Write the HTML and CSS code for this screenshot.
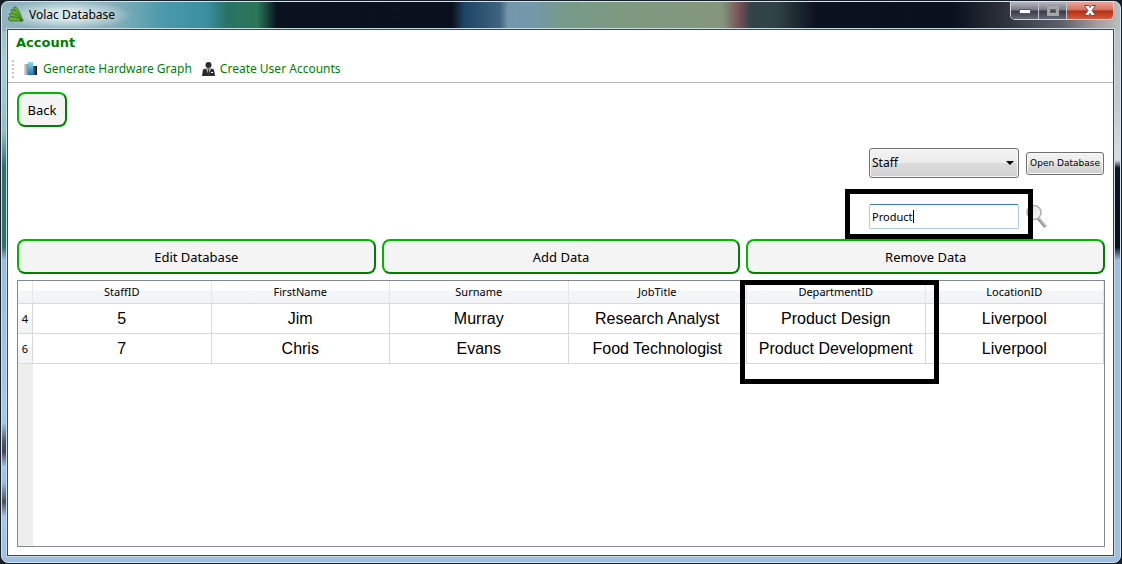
FILE: index.html
```html
<!DOCTYPE html>
<html lang="en">
<head>
<meta charset="utf-8">
<title>Volac Database</title>
<link rel="stylesheet" href="styles.css">
</head>
<body>
<div class="window">
  <header class="titlebar">
    <svg class="logo" width="16" height="16" viewBox="0 0 16 16" aria-hidden="true">
      <g fill="#62b233" stroke="#2c5f20" stroke-width=".7">
        <path d="M13 14C9 9 5 4 6 1C9 0 12 6 14 13Z"/>
        <path d="M13 14C8 11 3 7 3 4C6 2 10 7 13 13Z"/>
        <path d="M13 14C8 13 2 11 1 8C4 6 9 9 13 13Z"/>
        <path d="M14 15H2C0 14 0 12 1 11C5 10 10 12 14 14Z"/>
        <path d="M14 14L15 13L15 15H12Z"/>
      </g>
    </svg>
    <h1 class="title">Volac Database</h1>
    <div class="caption-buttons">
      <button class="cap" type="button" aria-label="Minimize">
        <svg width="12" height="6" viewBox="0 0 12 6"><rect x=".5" y="1.5" width="11" height="4" fill="#fff" stroke="#555b6b"/></svg>
      </button>
      <button class="cap" type="button" aria-label="Maximize" disabled>
        <svg width="12" height="10" viewBox="0 0 12 10"><path d="M1.5 1.5h9v7h-9z" fill="none" stroke="#a5a6a8" stroke-width="3"/><path d="M3.5 3.5h5v3h-5z" fill="none" stroke="#606368"/></svg>
      </button>
      <button class="cap cap-close" type="button" aria-label="Close">
        <svg width="12" height="11" viewBox="0 0 12 11"><path d="M.5.5h4L6 2.5 7.500.5h4L8 5.500l3.500 5h-4L6 8.500l-1.500 2h-4L4 5.500z" fill="#fff" stroke="#52576c"/></svg>
      </button>
    </div>
  </header>
  <main class="client">
    <nav class="menubar"><a class="menu" href="#account">Account</a></nav>
    <div class="toolbar" role="toolbar" aria-label="Account">
      <span class="grip"></span>
      <button class="tool" type="button">
        <svg width="14" height="14" viewBox="0 0 14 14" aria-hidden="true">
          <defs>
            <linearGradient id="g1"><stop stop-color="#ddd"/><stop offset="1" stop-color="#888"/></linearGradient>
            <linearGradient id="g2" x2="0" y2="1"><stop stop-color="#8fd6f0"/><stop offset="1" stop-color="#1b78b4"/></linearGradient>
            <linearGradient id="g3"><stop stop-color="#666"/><stop offset="1" stop-color="#111"/></linearGradient>
          </defs>
          <path fill="url(#g1)" d="M0 2h4v11H0z"/><path fill="url(#g2)" d="M4 0h5v13H4z"/><path fill="url(#g3)" d="M9 4h4v9H9z"/>
        </svg>
        Generate Hardware Graph
      </button>
      <button class="tool" type="button">
        <svg width="13" height="14" viewBox="0 0 13 14" aria-hidden="true">
          <circle cx="6.500" cy="3" r="3" fill="#2b2b2b"/>
          <path d="M1 7.500L4 6.500H9L12 7.500L13 14H0Z" fill="#2b2b2b"/>
          <path d="M4 6.500L6.500 13L9 6.500L7.500 7.500H5.500Z" fill="#fff"/>
          <path d="M5.800 7.500H7.200L7.500 11L6.500 13L5.500 11Z" fill="#2b2b2b"/>
          <path d="M9 10.500h2" stroke="#fff"/>
        </svg>
        Create User Accounts
      </button>
    </div>
    <div class="content">
      <button class="action back" type="button">Back</button>
      <form class="controls" onsubmit="return false">
        <div class="picker">
          <select class="table-select" aria-label="Table"><option>Staff</option></select>
        </div>
        <button class="open" type="button">Open Database</button>
        <div class="search">
          <input class="search-input" type="text" value="Product" aria-label="Search">
          <span class="caret"></span>
          <span class="marker marker-search"></span>
        </div>
        <button class="find" type="button" aria-label="Find">
          <svg width="22" height="25" viewBox="0 0 22 25">
            <defs><linearGradient id="lens" x2="1" y2="1"><stop stop-color="#ddd"/><stop offset="1" stop-color="#fafafa"/></linearGradient></defs>
            <path d="M12 14L19.500 23" stroke="#9a9a9a" stroke-width="3.500"/>
            <path d="M13 14L20 22" stroke="#ddd" stroke-width="1"/>
            <circle cx="8" cy="8.500" r="7" fill="url(#lens)" stroke="#b0b0b0" stroke-width="1.500"/>
          </svg>
        </button>
      </form>
      <div class="actions">
        <button class="action" type="button">Edit Database</button>
        <button class="action" type="button">Add Data</button>
        <button class="action" type="button">Remove Data</button>
      </div>
      <div class="grid-view">
        <table class="grid">
          <thead>
            <tr><td class="corner"></td><th>StaffID</th><th>FirstName</th><th>Surname</th><th>JobTitle</th><th class="marked">DepartmentID<span class="marker marker-column"></span></th><th>LocationID</th></tr>
          </thead>
          <tbody>
            <tr><th>4</th><td>5</td><td>Jim</td><td>Murray</td><td>Research Analyst</td><td>Product Design</td><td>Liverpool</td></tr>
            <tr><th>6</th><td>7</td><td>Chris</td><td>Evans</td><td>Food Technologist</td><td>Product Development</td><td>Liverpool</td></tr>
          </tbody>
        </table>
      </div>
    </div>
  </main>
</div>
</body>
</html>
```
FILE: styles.css
```css
* { box-sizing: border-box; }

body {
  margin: 0;
  background: #15202a;
  color: #000;
  font: 12px/16px "Noto Sans", sans-serif;
}

button, select, input { font: inherit; color: inherit; margin: 0; }

.window {
  display: flex;
  flex-direction: column;
  min-height: calc(100vh - 2px);
  margin: 1px;
  padding: 0 6px 6px 5px;
  border: 1px solid #d5e4ec;
  border-radius: 7px;
  background:
    linear-gradient(90deg, #8fb4bd 0, #88b0ba 110px, #4c9aab 160px, #3a8f9f 205px, #287267 225px, #2c7758 255px, #0a121f 275px, #0a111d 450px, #1d4465 462px, #3f6480 498px, #7396ab 506px, #7299aa 530px, #759a8b 560px, #7d997f 620px, #84967d 720px, #795155 737px, #34444a 748px, #2e4244 775px, #0b111d 815px, #0a111c 950px, #2c303b 1000px, #5d606b 1060px, #a79a9f 1095px, #b8c0bd 100%) top / 100% 29px no-repeat,
    linear-gradient(#8fb4bd 0, #a9cdd8 60px, #90bdc8 130px, #2e6f72 165px, #2e7469 245px, #9ebae0 258px, #a5c8ef 420px, #4d566b 440px, #46495c 450px, #a5c8ef 465px, #9dbbe0 480px, #484e62 500px, #a8c8ea 515px, #9dbfe2 100%) left / 50% 100% no-repeat,
    linear-gradient(#b8c0bd 0, #c5c6cf 100px, #dadbe4 158px, #0a1624 166px, #08101a 245px, #9dbfe2 258px, #9dbfe2 100%) right / 50% 100% no-repeat;
}

.titlebar {
  display: flex;
  align-items: flex-start;
  height: 27px;
  padding-left: 1px;
  background: radial-gradient(ellipse 65px 15px at 60px 13px, #dbe8ec 30%, transparent);
}

.logo { margin: 4px 5px 0 0; }

.title {
  flex: 1;
  margin: 5px 0 0;
  font-size: 12px;
  font-weight: 400;
  line-height: 16px;
}

.caption-buttons {
  display: flex;
  border: 1px solid #d5d5da;
  border-top: 0;
  border-radius: 0 0 5px 5px;
  overflow: hidden;
}

.cap {
  display: grid;
  place-items: center;
  width: 28px;
  height: 17px;
  padding: 0;
  border: 0;
  border-right: 1px solid #c5c6cc;
  background: linear-gradient(#b5b6bd, #777a84 48%, #343946 52%, #656975);
}

.cap-close {
  width: 46px;
  border-right: 0;
  background: linear-gradient(#eca398, #d4705d 48%, #b22c13 52%, #d85a3d);
}

.client {
  flex: 1;
  display: flex;
  flex-direction: column;
  border: 1px solid #3b4751;
  outline: 1px solid #c9dce6;
  background: #fff;
}

.menubar { padding: 5px 8px; }

.menu {
  color: #008000;
  font: bold 13px/16px "DejaVu Sans", sans-serif;
  text-decoration: none;
}

.toolbar {
  display: flex;
  align-items: center;
  gap: 10px;
  height: 27px;
  padding-left: 4px;
  border-bottom: 1px solid #b8b8b8;
}

.grip {
  width: 2px;
  height: 18px;
  background: repeating-linear-gradient(#c4c4c4 0 2px, #fff 2px 4px);
}

.tool {
  display: flex;
  align-items: center;
  gap: 5px;
  padding: 0;
  border: 0;
  background: none;
  color: #008000;
  font: 12px/16px "Noto Sans", sans-serif;
}

.content {
  flex: 1;
  display: flex;
  flex-direction: column;
  padding: 9px 8px 8px 9px;
}

.action {
  flex: 1;
  height: 35px;
  padding: 0;
  border: 2px solid;
  border-color: #00b800 #008000 #008000 #00b800;
  border-radius: 8px;
  background: #f4f4f4;
  font-size: 13px;
}

.back { flex: none; width: 50px; }

.controls {
  display: grid;
  grid-template-columns: 150px 78px;
  justify-content: end;
  align-items: center;
  gap: 26px 7px;
  margin: 21px 1px 10px;
}

.picker { position: relative; }

.picker::after {
  content: "";
  position: absolute;
  top: 13px;
  right: 5px;
  border: 4px solid transparent;
  border-top-color: #000;
  border-bottom: 0;
}

.table-select {
  display: block;
  width: 100%;
  height: 30px;
  padding: 0 2px;
  appearance: none;
  border: 1px solid #707070;
  border-radius: 3px;
  background: linear-gradient(#f2f2f2, #ebebeb 49%, #dddddd 51%, #cfcfcf);
  box-shadow: inset 0 0 0 1px #f8f8f8;
}

.open {
  height: 23px;
  padding: 0;
  border: 1px solid #707070;
  border-radius: 3px;
  background: linear-gradient(#f2f2f2, #ebebeb 49%, #dddddd 51%, #cfcfcf);
  box-shadow: inset 0 0 0 1px #f8f8f8;
  font: 9px/16px "DejaVu Sans", sans-serif;
  white-space: nowrap;
}

.search { position: relative; }

.search-input {
  display: block;
  width: 100%;
  height: 25px;
  padding: 0 2px;
  border: 1px solid #a9cce3;
  border-top-color: #3d7bad;
  border-radius: 2px;
  font-size: 11px;
}

.caret {
  position: absolute;
  top: 6px;
  left: 44px;
  width: 1px;
  height: 13px;
  background: #000;
}

.marker {
  position: absolute;
  z-index: 1;
  border: 5px solid #000;
  pointer-events: none;
}

.marker-search { inset: -15px -14px -10px -24px; }

.marker-column {
  top: -1px;
  left: -7px;
  right: -14px;
  height: 104px;
}

.find {
  display: grid;
  width: 22px;
  padding: 0;
  border: 0;
  background: none;
}

.actions { display: flex; gap: 6px; }

.grid-view {
  flex: 1;
  margin-top: 6px;
  border: 1px solid #828790;
  background: linear-gradient(90deg, #eee 15px, #fff 15px);
}

.grid {
  width: 100%;
  table-layout: fixed;
  border-collapse: separate;
  border-spacing: 0;
  background: #fff;
  text-align: center;
}

.grid td, .grid th {
  padding: 0;
  border: solid #d8d8d8;
  border-width: 0 1px 1px 0;
}

.grid th { font-weight: 400; }

.grid thead th, .grid .corner {
  height: 23px;
  border-right-color: #e4e6e8;
  background: linear-gradient(#fff 40%, #f4f6f8 45%, #f1f3f5);
}

.grid thead th { font-size: 11px; }

.grid .corner { width: 15px; }

.grid .marked { position: relative; }

.grid tbody td {
  height: 30px;
  font: 16px/20px "Liberation Sans", sans-serif;
}

.grid tbody th {
  background: linear-gradient(#fff 40%, #f4f6f8 45%, #f1f3f5);
  font-size: 11px;
}
```
